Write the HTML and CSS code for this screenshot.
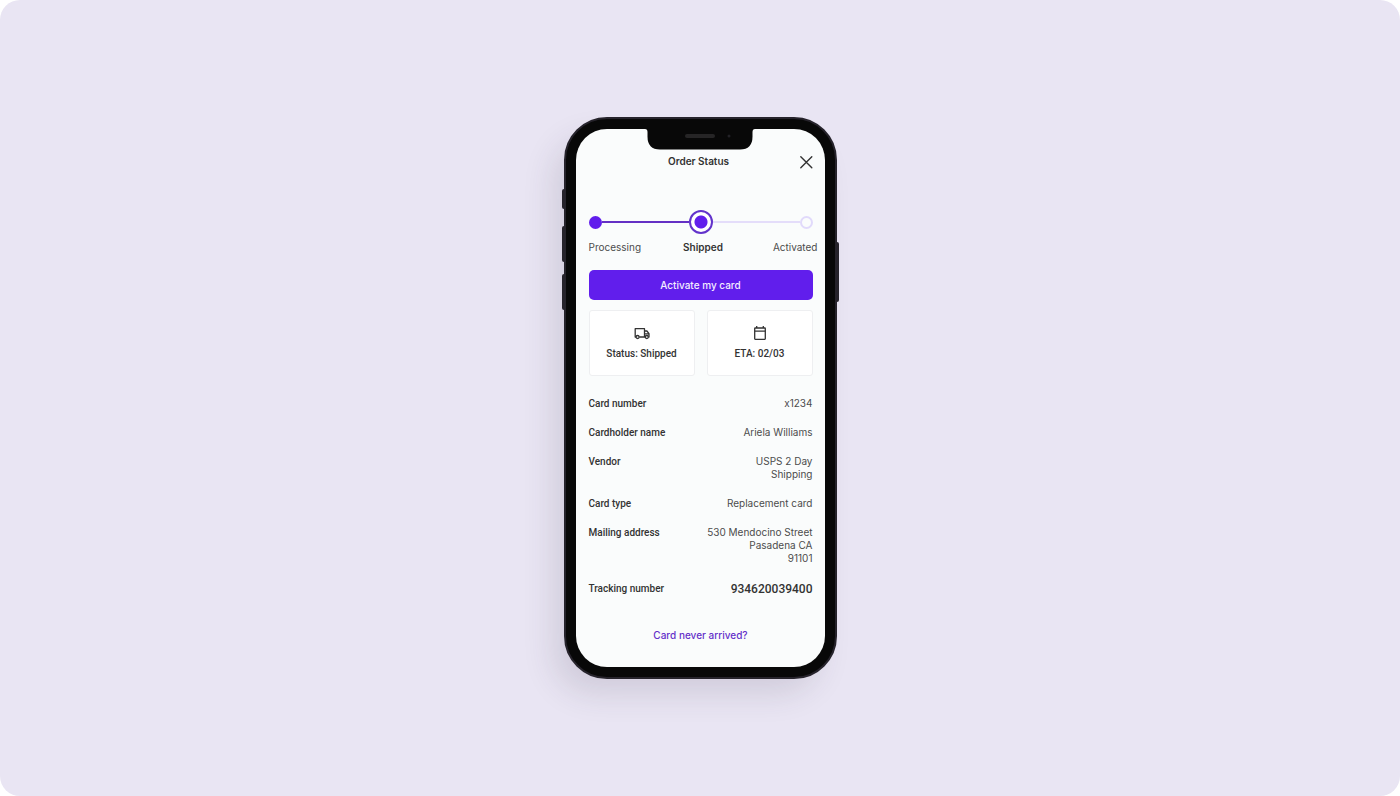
FILE: index.html
```html
<!DOCTYPE html>
<html lang="en">
<head>
<meta charset="utf-8">
<meta name="viewport" content="width=device-width, initial-scale=1">
<title>Order Status</title>
<link rel="stylesheet" href="styles.css">
</head>
<body>
<div class="stage">
  <div class="phone">
    <span class="side-key mute"></span>
    <span class="side-key volume-up"></span>
    <span class="side-key volume-down"></span>
    <span class="side-key power"></span>
    <svg class="notch" width="110" height="22" viewBox="0 0 110 22" aria-hidden="true">
      <path d="M0 0H110V1Q107.500 1 107.500 4V8.500Q107.500 21.500 95 21.500H15Q2.500 21.500 2.500 8.500V4Q2.500 1 0 1Z" fill="#080808"/>
      <rect x="40" y="6" width="30" height="4" rx="2" fill="#262526"/>
      <circle cx="84" cy="8" r="1.500" fill="#222126"/>
    </svg>
    <main class="screen">
      <header class="top-bar">
        <h1 class="title">Order Status</h1>
        <button class="close" type="button" aria-label="Close">
          <svg width="14" height="14" viewBox="0 0 14 14" aria-hidden="true"><path d="M1.800 1.800L12.800 12.800M12.800 1.800L1.800 12.800" stroke="#333" stroke-width="1.400" stroke-linecap="round" fill="none"/></svg>
        </button>
      </header>

      <div class="track" aria-hidden="true">
        <span class="dot done"></span>
        <span class="line done"></span>
        <span class="dot current"></span>
        <span class="line"></span>
        <span class="dot"></span>
      </div>
      <ol class="steps">
        <li>Processing</li>
        <li class="active" aria-current="step">Shipped</li>
        <li class="last">Activated</li>
      </ol>

      <button class="activate" type="button">Activate my card</button>

      <div class="tiles">
        <section class="tile">
          <svg width="16" height="16" viewBox="0 0 16 16" fill="none" stroke="#333" stroke-width="1.300" stroke-linejoin="round" aria-hidden="true">
            <path d="M2 12H1.200V3.700H10.500V12H5.200M10.500 6H12.900L15 8.700V12H14.300M11.300 12H10.500M10.500 8.800H15"/>
            <circle cx="3.600" cy="12" r="1.500"/><circle cx="12.800" cy="12" r="1.500"/>
          </svg>
          <p>Status: Shipped</p>
        </section>
        <section class="tile">
          <svg width="16" height="16" viewBox="0 0 16 16" fill="none" stroke="#333" stroke-width="1.300" stroke-linejoin="round" aria-hidden="true">
            <rect x="2.700" y="3" width="10.600" height="11.300" rx=".5"/>
            <path d="M2.700 6.200H13.300M4.700 1V3M11.300 1V3"/>
          </svg>
          <p>ETA: 02/03</p>
        </section>
      </div>

      <dl class="details">
        <div class="row"><dt>Card number</dt><dd>x1234</dd></div>
        <div class="row"><dt>Cardholder name</dt><dd>Ariela Williams</dd></div>
        <div class="row"><dt>Vendor</dt><dd>USPS 2 Day<br>Shipping</dd></div>
        <div class="row"><dt>Card type</dt><dd>Replacement card</dd></div>
        <div class="row"><dt>Mailing address</dt><dd>530 Mendocino Street<br>Pasadena CA<br>91101</dd></div>
        <div class="row tracking"><dt>Tracking number</dt><dd>934620039400</dd></div>
      </dl>

      <a class="help" href="#help">Card never arrived?</a>
    </main>
  </div>
</div>
</body>
</html>
```
FILE: styles.css
```css
* { box-sizing: border-box; }

body {
  margin: 0;
  background: #fff;
  color: #333;
  font: 10px/13px Inter, "Liberation Sans", sans-serif;
}

h1, p, ol, dl, dd { margin: 0; }

.stage {
  display: flex;
  align-items: center;
  justify-content: center;
  min-height: 100vh;
  padding: 40px 16px;
  border-radius: 20px;
  background: #e9e5f3;
}

.phone {
  position: relative;
  width: 273px;
  padding: 10px;
  border: 2px solid #26232b;
  border-radius: 43px;
  background: #080808;
  box-shadow: -14px 18px 32px -4px rgba(60, 50, 70, 0.14);
}

.side-key {
  position: absolute;
  left: -4px;
  width: 2px;
  border-radius: 2px 0 0 2px;
  background: #26232b;
}
.mute { top: 70px; height: 20px; }
.volume-up { top: 107px; height: 36px; }
.volume-down { top: 155px; height: 36px; }
.power {
  top: 123px;
  right: -4px;
  left: auto;
  height: 60px;
  border-radius: 0 2px 2px 0;
}

.notch {
  position: absolute;
  top: 9px;
  left: 50%;
  transform: translateX(-50%);
}

.screen {
  display: flex;
  flex-direction: column;
  padding: 24px 12px 25px 13px;
  border-radius: 31px;
  background: #fafcfc;
}

.top-bar {
  display: grid;
  grid-template-columns: 10px 1fr 14px;
  align-items: center;
}
.title {
  grid-column: 2;
  font-size: 10px;
  font-weight: 600;
  line-height: 17px;
  text-align: center;
}
.close {
  display: flex;
  padding: 0;
  border: 0;
  background: none;
}

.track {
  display: flex;
  align-items: center;
  height: 24px;
  margin-top: 40px;
}
.dot {
  width: 13px;
  height: 13px;
  border: 2px solid #e1dafb;
  border-radius: 50%;
}
.dot.done { border-color: #611eec; background: #611eec; }
.dot.current {
  width: 24px;
  height: 24px;
  border-color: #6233cb;
  background: radial-gradient(circle, #611eec 6px, #fff 7px);
}
.line { flex: 1; height: 2px; background: #e4ddfa; }
.line.done { background: #6430c4; }

.steps {
  display: grid;
  grid-template-columns: 1fr auto 1fr;
  margin: 7px -5px 0 0;
  padding: 0;
  list-style: none;
  color: #4c4c4c;
}
.active { color: #333; font-weight: 600; }
.last { text-align: right; }

.activate {
  height: 30px;
  margin-top: 16px;
  padding: 0;
  border: 0;
  border-radius: 5px;
  background: #611eec;
  color: #f4edff;
  font: inherit;
  font-weight: 500;
}

.tiles {
  display: grid;
  grid-template-columns: 1fr 1fr;
  gap: 12px;
  margin-top: 10px;
}
.tile {
  display: flex;
  flex-direction: column;
  align-items: center;
  gap: 6px;
  padding: 14px 0 15px;
  border: 1px solid #eeeff1;
  border-radius: 3px;
  background: #fff;
  font-family: Roboto, "Liberation Sans", sans-serif;
  font-weight: 500;
}

.details {
  display: flex;
  flex-direction: column;
  gap: 16px;
  margin-top: 21px;
}
.row {
  display: flex;
  justify-content: space-between;
}
.row dt {
  font-family: Roboto, "Liberation Sans", sans-serif;
  font-weight: 500;
}
.row dd { color: #4c4c4c; text-align: right; }
.tracking { line-height: 16px; }
.tracking dd {
  color: #333;
  font-family: Roboto, "Liberation Sans", sans-serif;
  font-size: 12px;
  font-weight: 500;
}

.help {
  align-self: center;
  margin-top: 32px;
  color: #6430c9;
  font-weight: 500;
  text-decoration: none;
}
```
